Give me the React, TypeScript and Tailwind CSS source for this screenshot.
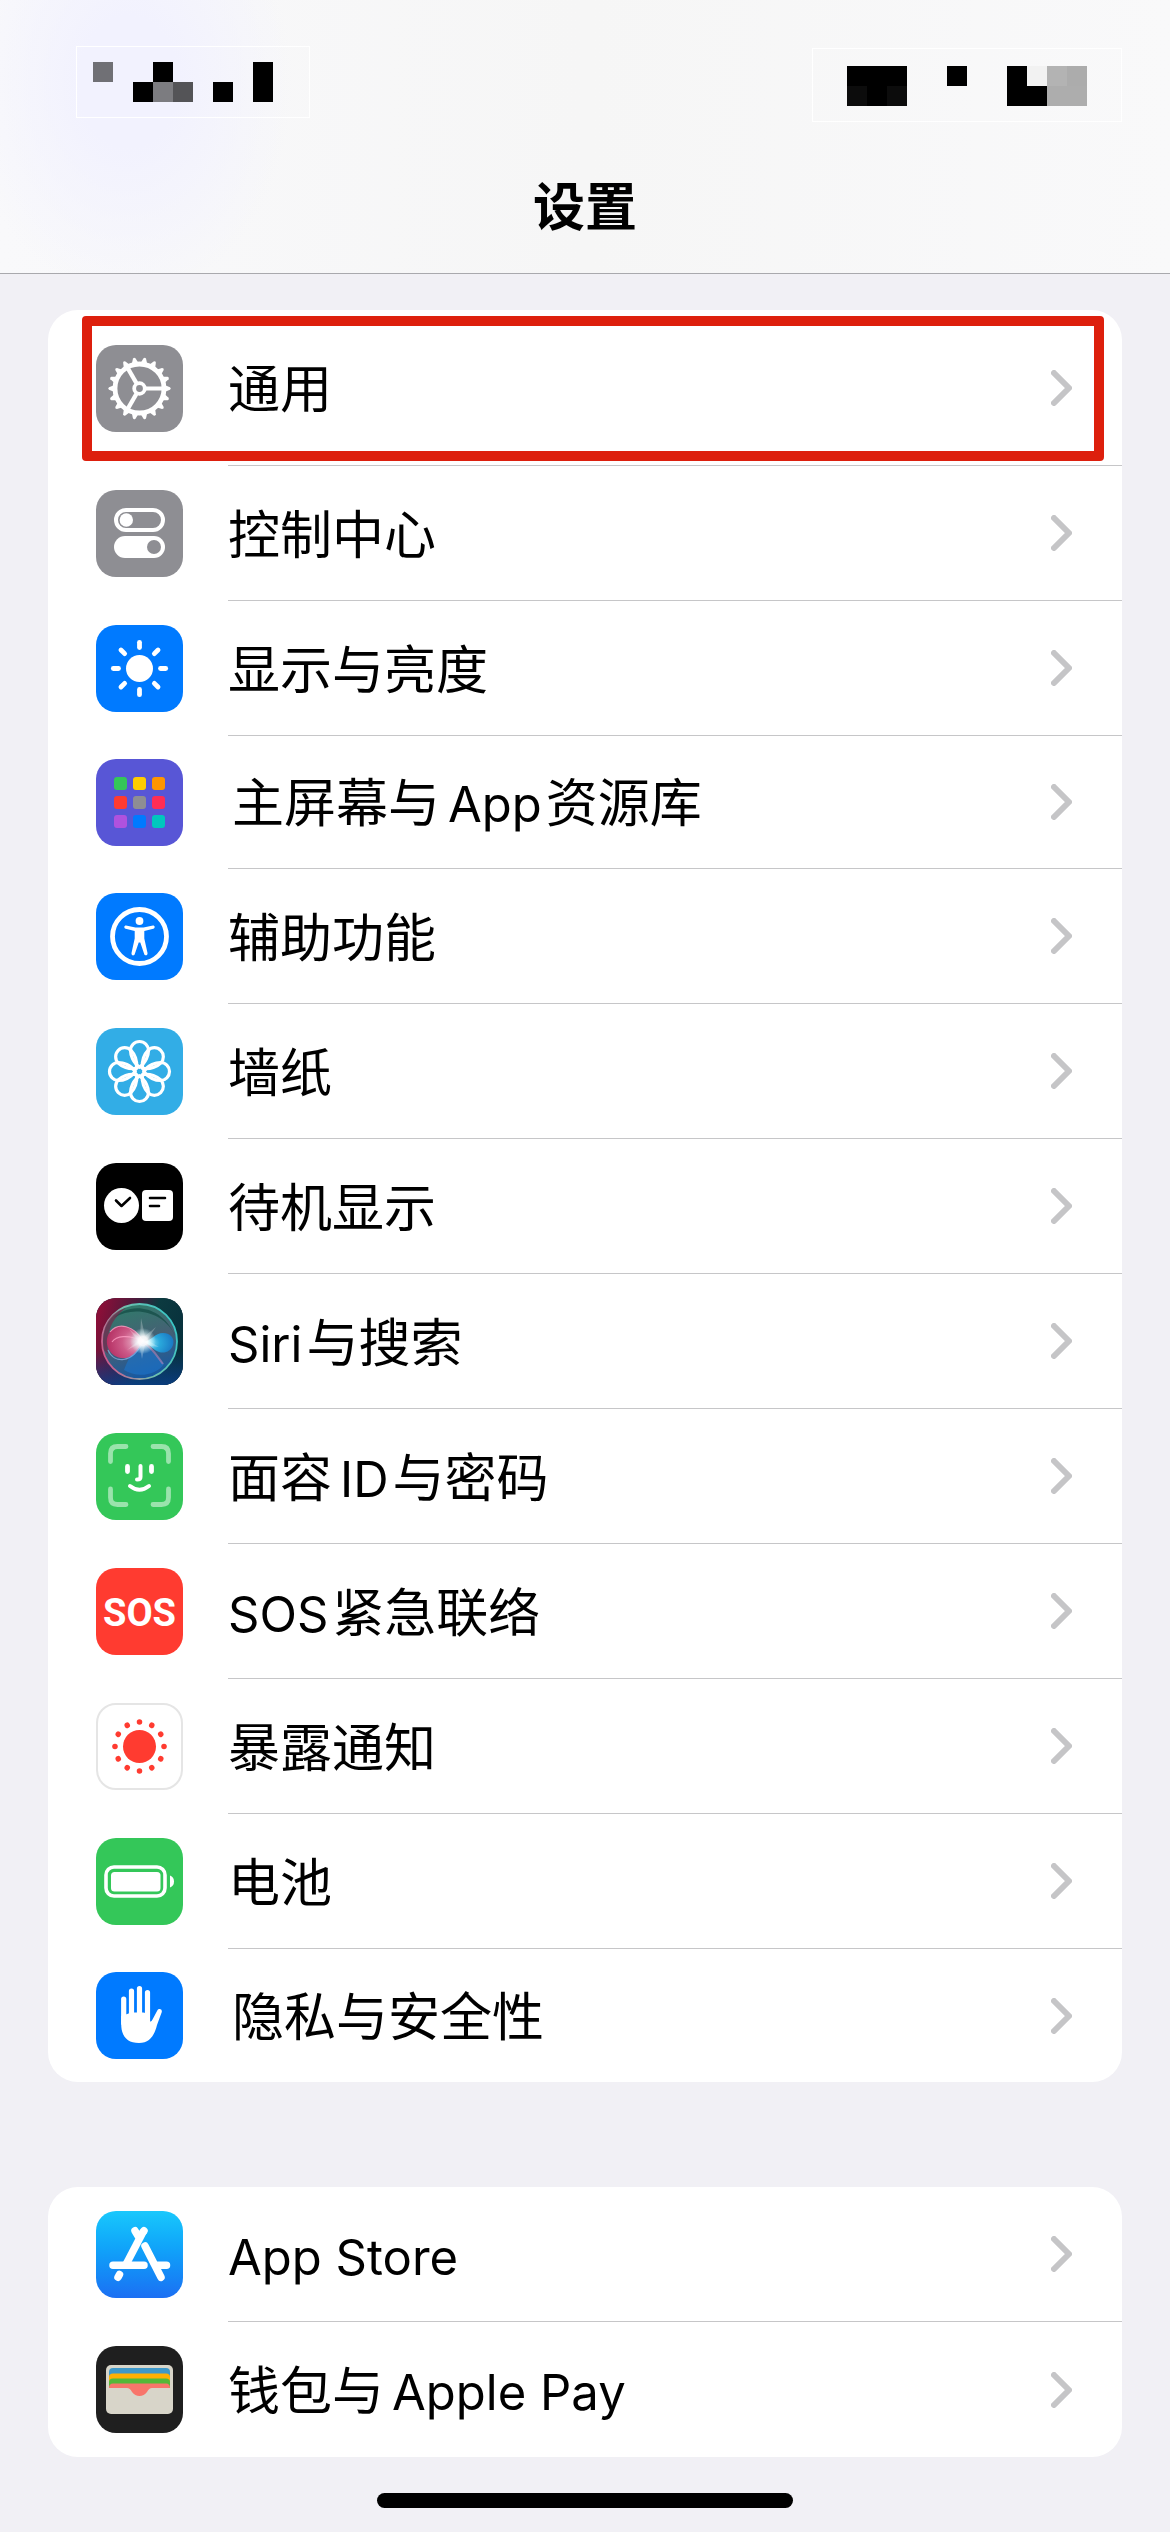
import type { ReactNode } from 'react'
import { clsx } from 'clsx'

interface SettingsItem {
  id: string
  label: string
  icon: ReactNode
  size?: 'tall' | 'regular' | 'short'
  highlighted?: boolean
}

interface MosaicCell {
  x: number
  y: number
  w?: number
  h?: number
  fill: string
}

const rowHeights = {
  tall: 'h-[156px]',
  regular: 'h-[135px]',
  short: 'h-[133px]',
}

const labelPadding = {
  tall: 'pt-1',
  regular: 'pt-1.5',
  short: 'pt-1 pl-1',
}

const leftMosaic: MosaicCell[] = [
  { x: 16, y: 15, fill: '#707075' },
  { x: 76, y: 15, fill: '#000' },
  { x: 56, y: 35, fill: '#000' },
  { x: 76, y: 35, fill: '#7c7c80' },
  { x: 96, y: 35, fill: '#545457' },
  { x: 136, y: 35, fill: '#000' },
  { x: 176, y: 15, h: 40, fill: '#000' },
]

const rightMosaic: MosaicCell[] = [
  { x: 34, y: 17, w: 60, h: 40, fill: '#000' },
  { x: 34, y: 37, fill: '#0c0c0c' },
  { x: 74, y: 37, fill: '#0c0c0c' },
  { x: 134, y: 17, fill: '#000' },
  { x: 194, y: 17, h: 40, fill: '#000' },
  { x: 214, y: 17, fill: '#f2f2f2' },
  { x: 214, y: 37, fill: '#000' },
  { x: 234, y: 17, fill: '#b3b3b3' },
  { x: 254, y: 17, fill: '#acacac' },
  { x: 234, y: 37, w: 40, fill: '#adadad' },
]

function Mosaic({ cells, className }: { cells: MosaicCell[]; className: string }) {
  return (
    <svg className={className} aria-hidden="true" shapeRendering="crispEdges">
      {cells.map((c) => (
        <rect key={`${c.x}-${c.y}`} x={c.x} y={c.y} width={c.w ?? 20} height={c.h ?? 20} fill={c.fill} />
      ))}
    </svg>
  )
}

function Tile({ className, children }: { className: string; children: ReactNode }) {
  return (
    <span className={clsx('block size-[87px] shrink-0 overflow-hidden rounded-[20px]', className)}>
      <svg viewBox="0 0 87 87" className="size-full" aria-hidden="true">
        {children}
      </svg>
    </span>
  )
}

// evenly spaced angles for radial icons
function ring(count: number, offset = 0) {
  return Array.from({ length: count }, (_, i) => offset + (i * 360) / count)
}

function GearIcon() {
  return (
    <Tile className="bg-[#8e8e93]">
      <g fill="#fff">
        {ring(18, 10).map((a) => (
          <path key={a} d="M40 18.5 42.2 13q1.3-1.6 2.6 0L47 18.5Z" transform={`rotate(${a} 43.5 43.5)`} />
        ))}
      </g>
      <g fill="none" stroke="#fff">
        <circle cx="43.5" cy="43.5" r="24.5" strokeWidth="4.8" />
        <circle cx="43.5" cy="43.5" r="5.3" strokeWidth="3.8" />
        {ring(3).map((a) => (
          <path key={a} d="M50 43.5H67" strokeWidth="4.2" transform={`rotate(${a} 43.5 43.5)`} />
        ))}
      </g>
    </Tile>
  )
}

function TogglesIcon() {
  return (
    <Tile className="bg-[#8e8e93]">
      <rect x="20" y="20" width="47" height="20" rx="10" fill="none" stroke="#fff" strokeWidth="4" />
      <circle cx="30.3" cy="30" r="6.7" fill="#fff" />
      <rect x="18" y="46" width="51" height="22" rx="11" fill="#fff" />
      <circle cx="58" cy="57" r="7" fill="#8e8e93" />
    </Tile>
  )
}

function BrightnessIcon() {
  return (
    <Tile className="bg-[#007aff]">
      <circle cx="43.5" cy="43.5" r="13.5" fill="#fff" />
      {ring(8).map((a) => (
        <path
          key={a}
          d="M43.5 17.3v5.2"
          stroke="#fff"
          strokeWidth="4.8"
          strokeLinecap="round"
          transform={`rotate(${a} 43.5 43.5)`}
        />
      ))}
    </Tile>
  )
}

const gridColors = [
  '#34c759', '#ffcc00', '#ff9500',
  '#ff3b30', '#8e8e93', '#ff2d55',
  '#af52de', '#007aff', '#00c7be',
]

function HomeGridIcon() {
  return (
    <Tile className="bg-[#5856d6]">
      {gridColors.map((color, i) => (
        <rect
          key={color}
          x={18 + (i % 3) * 19}
          y={18 + Math.floor(i / 3) * 19}
          width="13"
          height="13"
          rx="3"
          fill={color}
        />
      ))}
    </Tile>
  )
}

function AccessibilityIcon() {
  return (
    <Tile className="bg-[#007aff]">
      <circle cx="43.5" cy="43.5" r="27" fill="none" stroke="#fff" strokeWidth="4.8" />
      <circle cx="43.5" cy="28" r="3.9" fill="#fff" />
      <path
        d="M30 32.5 39.5 34.5h8L57 32.5c2 0 2.3 2.6.3 3.2L48.3 38v7.5l3.2 14.5c.4 2.6-2.6 3.2-3.3.9L44.3 49.5h-1.6L38.8 61c-.7 2.300-3.700 1.700-3.300-.9L38.700 45.500V38L29.700 35.700c-2-.6-1.700-3.200.3-3.200Z"
        fill="#fff"
      />
    </Tile>
  )
}

function FlowerIcon() {
  return (
    <Tile className="bg-[#32ade6]">
      <g fill="none" stroke="#fff" strokeWidth="3.2">
        {ring(8).map((a) => (
          <path
            key={a}
            d="M43.5 39C37 35 34.500 27 34.500 22.500a9 9 0 0 1 18 0c0 4.500-2.500 12.500-9 16.500Z"
            transform={`rotate(${a} 43.5 43.5)`}
          />
        ))}
        <circle cx="43.5" cy="43.5" r="4.5" />
      </g>
    </Tile>
  )
}

function StandByIcon() {
  return (
    <Tile className="bg-black">
      <circle cx="25.5" cy="42.5" r="17.5" fill="#fff" />
      <rect x="46" y="27" width="31" height="31" rx="4" fill="#fff" />
      <g fill="none" stroke="#000" strokeWidth="2.6" strokeLinecap="round" strokeLinejoin="round">
        <path d="m20 37.5 5.5 5.5 8.5-8" />
        <path d="M54 35H69M54 43h9" />
      </g>
    </Tile>
  )
}

function SiriIcon() {
  return (
    <Tile className="bg-[#112233]">
      <defs>
        <linearGradient id="siri-bg" x1="0" y1="0.3" x2="1" y2="0.6">
          <stop offset="0" stopColor="#8a0f38" />
          <stop offset="0.35" stopColor="#4a1a3c" />
          <stop offset="0.6" stopColor="#0c3a40" />
          <stop offset="1" stopColor="#07303c" />
        </linearGradient>
        <linearGradient id="siri-floor" x1="0" y1="0" x2="0" y2="1">
          <stop offset="0.6" stopColor="#0a3f8c" stopOpacity="0" />
          <stop offset="1" stopColor="#0a3f8c" stopOpacity="0.8" />
        </linearGradient>
        <linearGradient id="siri-orb" x1="0.3" y1="0" x2="0.6" y2="1">
          <stop offset="0" stopColor="#2f7c6a" />
          <stop offset="0.5" stopColor="#456074" />
          <stop offset="1" stopColor="#1458a4" />
        </linearGradient>
        <linearGradient id="siri-rim" x1="0" y1="0.7" x2="1" y2="0.3">
          <stop offset="0" stopColor="#d2568c" />
          <stop offset="0.5" stopColor="#6fbfae" />
          <stop offset="1" stopColor="#36c6c6" />
        </linearGradient>
        <radialGradient id="siri-pink" cx="0.85" cy="0.5" r="0.85">
          <stop offset="0" stopColor="#ffc5da" />
          <stop offset="0.5" stopColor="#dc5a8a" />
          <stop offset="1" stopColor="#c22a62" />
        </radialGradient>
        <radialGradient id="siri-blue" cx="0.1" cy="0.5" r="0.9">
          <stop offset="0" stopColor="#b5f4ff" />
          <stop offset="0.5" stopColor="#2aa9dc" />
          <stop offset="1" stopColor="#1a79c4" />
        </radialGradient>
        <radialGradient id="siri-glow">
          <stop offset="0" stopColor="#fff" />
          <stop offset="0.35" stopColor="#fff" stopOpacity="0.9" />
          <stop offset="1" stopColor="#ccffff" stopOpacity="0" />
        </radialGradient>
      </defs>
      <rect width="87" height="87" fill="url(#siri-bg)" />
      <rect width="87" height="87" fill="url(#siri-floor)" />
      <circle cx="43.5" cy="43.5" r="37.5" fill="url(#siri-orb)" stroke="url(#siri-rim)" strokeWidth="1.8" />
      <path d="M18 20C32 4 66 6 79 38 70 16 40 6 18 20Z" fill="#174f48" opacity="0.8" />
      <path d="M8 52C4 30 14 14 30 10 14 22 10 36 12 56Z" fill="#7d1c45" opacity="0.6" />
      <path d="M47 44C36 52 32 62 28 72 40 80 60 78 68 66 60 58 54 50 47 44Z" fill="#1d74cc" opacity="0.6" />
      <path d="M47 43C38 27 22 24 14 34S14 62 30 60c9-2 13-10 17-17Z" fill="url(#siri-pink)" opacity="0.9" />
      <path
        d="M47 43C38 27 22 24 14 34M16 44c4-6 16-8 30-1"
        fill="none"
        stroke="#ff9fc4"
        strokeWidth="1.2"
        opacity="0.8"
      />
      <path d="M47 44c8-1 12-9 20-9s12 6 10 12-8 9-14 7-9-8-16-10Z" fill="url(#siri-blue)" />
      <path d="M12 52c6 14 24 14 35-8" fill="none" stroke="#8fb6ea" strokeWidth="1.2" opacity="0.7" />
      <path d="M47 44c8 4 14 14 20 22" fill="none" stroke="#b884b8" strokeWidth="2" opacity="0.6" />
      <path d="m45 20 4 18 11-9-9 13 12 7-14-2-3 14-3-15-12 6 11-9-9-12 11 9Z" fill="#fff" opacity="0.25" />
      <circle cx="47" cy="43" r="13" fill="url(#siri-glow)" />
    </Tile>
  )
}

function FaceIdIcon() {
  return (
    <Tile className="bg-[#34c759]">
      <g fill="none" stroke="#fff" strokeWidth="4.8" strokeLinecap="round" strokeLinejoin="round">
        <path
          d="M14.5 28.5v-8q0-7 7-7H30M57 13.5h8.500q7 0 7 7v8M14.500 56v8.500q0 7 7 7H30M57 71.500h8.500q7 0 7-7V56"
          opacity="0.5"
        />
        <path d="M31.500 33.500v5M55.500 33.500v5" />
        <path d="M44.500 33v11q0 2.500-3.500 2.500" strokeWidth="4" />
        <path d="M34 53q9.500 7.500 19 0" strokeWidth="4" />
      </g>
    </Tile>
  )
}

function SosIcon() {
  return (
    <Tile className="bg-[#ff3b30]">
      <text
        x="43.5"
        y="58"
        textAnchor="middle"
        fill="#fff"
        className="font-['Liberation_Sans_Narrow','Roboto',sans-serif] text-[38px] font-bold"
      >
        SOS
      </text>
    </Tile>
  )
}

function ExposureIcon() {
  return (
    <Tile className="border-2 border-[#e5e5e5] bg-white">
      <circle cx="43.5" cy="43.5" r="17.3" fill="#ff3b30" />
      {ring(12).map((a) => (
        <circle key={a} cx="43.5" cy="17.8" r="2.9" fill="#ff3b30" transform={`rotate(${a} 43.5 43.5)`} />
      ))}
    </Tile>
  )
}

function BatteryIcon() {
  return (
    <Tile className="bg-[#34c759]">
      <rect x="10" y="29" width="59" height="29" rx="8" fill="none" stroke="#fff" strokeWidth="3.6" />
      <rect x="15" y="34" width="49.5" height="19.5" rx="3.5" fill="#fff" />
      <path d="M74 37.500q4 1.500 4 6t-4 6Z" fill="#fff" />
    </Tile>
  )
}

function HandIcon() {
  return (
    <Tile className="bg-[#007aff]">
      <path
        d="M27.7 27v24M35.5 19v28M43.5 16.500V47M51.500 20.500V49"
        fill="none"
        stroke="#fff"
        strokeWidth="5.2"
        strokeLinecap="round"
      />
      <path
        d="M25.200 44l6-2 4-1.500h12L54 42v7.500q1.500.5 2.500-2l4.800-9c1.500-2.500 5-1.500 4.500 1.500L61 53C58.500 63 54 71 43 71 31 71 25.200 64 25.200 52Z"
        fill="#fff"
      />
    </Tile>
  )
}

function AppStoreIcon() {
  return (
    <Tile className="bg-linear-to-b from-[#1ac8fc] to-[#1c6ff3]">
      <g fill="none" stroke="#fff" strokeWidth="7.5" strokeLinecap="round">
        <path d="M47.500 20 30 53.500" strokeLinecap="butt" />
        <path d="M48 19.800 47.500 20.500M39 19.800 42 25" />
        <path d="M49 35 65 66.300" />
        <path d="M23.500 63.500 22 66.300" />
        <path d="M17 54.200H48M62 54.200h8.500" />
      </g>
    </Tile>
  )
}

function WalletIcon() {
  return (
    <Tile className="bg-[#1f1f1f]">
      <rect x="10" y="19" width="67" height="49" rx="5" fill="#d8d5c9" />
      <path d="M13 32v-6q0-4 4-4h53q4 0 4 4v6Z" fill="#3e98c9" />
      <path d="M13 37v-6q0-3.500 4-3.500h53q4 0 4 3.500v6Z" fill="#ffb003" />
      <path d="M13 42v-6q0-3.500 4-3.500h53q4 0 4 3.500v6Z" fill="#54b839" />
      <path d="M13 42q0-4.500 4-4.500h53q4 0 4 4.500H56q-3 0-5 4-3 4-7.500 4T36 46q-2-4-5-4Z" fill="#f8756b" />
    </Tile>
  )
}

const systemItems: SettingsItem[] = [
  { id: 'general', label: '通用', icon: <GearIcon />, size: 'tall', highlighted: true },
  { id: 'control-center', label: '控制中心', icon: <TogglesIcon /> },
  { id: 'display', label: '显示与亮度', icon: <BrightnessIcon /> },
  { id: 'home-screen', label: '主屏幕与App资源库', icon: <HomeGridIcon />, size: 'short' },
  { id: 'accessibility', label: '辅助功能', icon: <AccessibilityIcon /> },
  { id: 'wallpaper', label: '墙纸', icon: <FlowerIcon /> },
  { id: 'standby', label: '待机显示', icon: <StandByIcon /> },
  { id: 'siri', label: 'Siri与搜索', icon: <SiriIcon /> },
  { id: 'face-id', label: '面容ID与密码', icon: <FaceIdIcon /> },
  { id: 'sos', label: 'SOS紧急联络', icon: <SosIcon /> },
  { id: 'exposure', label: '暴露通知', icon: <ExposureIcon /> },
  { id: 'battery', label: '电池', icon: <BatteryIcon /> },
  { id: 'privacy', label: '隐私与安全性', icon: <HandIcon />, size: 'short' },
]

const storeItems: SettingsItem[] = [
  { id: 'app-store', label: 'App Store', icon: <AppStoreIcon /> },
  { id: 'wallet', label: '钱包与Apple Pay', icon: <WalletIcon /> },
]

// Latin runs are set a little smaller and get some air next to Chinese text
function Label({ text }: { text: string }) {
  const runs = text.split(/([A-Za-z][A-Za-z ]*)/).filter(Boolean)
  return runs.map((run, i) =>
    /^[A-Za-z]/.test(run) ? (
      <span key={run} className={clsx('text-[49px]', i > 0 && 'ml-2', i < runs.length - 1 && 'mr-1')}>
        {run}
      </span>
    ) : (
      run
    ),
  )
}

function SettingsRow({ item }: { item: SettingsItem }) {
  const size = item.size ?? 'regular'
  return (
    <li className={clsx('group relative', rowHeights[size])}>
      <a href={`#${item.id}`} className="flex h-full items-center gap-[45px] pl-12">
        {item.icon}
        <span className="flex h-full flex-1 items-center justify-between border-b border-[#c6c6c8] pr-[50px] group-last:border-b-0">
          <span className={clsx('whitespace-nowrap', labelPadding[size])}>
            <Label text={item.label} />
          </span>
          <svg viewBox="0 0 21 36" className="h-9 w-[21px] shrink-0" aria-hidden="true">
            <path
              d="M3 3 18 18 3 33"
              fill="none"
              stroke="#c5c5c7"
              strokeWidth="6"
              strokeLinecap="round"
              strokeLinejoin="round"
            />
          </svg>
        </span>
      </a>
      {item.highlighted && (
        <span
          aria-hidden="true"
          className="pointer-events-none absolute top-1.5 right-[18px] bottom-[5px] left-[34px] rounded-[4px] border-10 border-[#dd1f0d]"
        />
      )}
    </li>
  )
}

function SettingsGroup({ items }: { items: SettingsItem[] }) {
  return (
    <ul className="rounded-[30px] bg-white">
      {items.map((item) => (
        <SettingsRow key={item.id} item={item} />
      ))}
    </ul>
  )
}

export default function App() {
  return (
    <div className="flex min-h-screen flex-col bg-[#f1f0f5] font-['Inter','Noto_Sans_CJK_SC',sans-serif] text-[52px] leading-[72px] text-black">
      <header className="border-b border-[#a9a9ad] bg-linear-to-r from-[#f9f9fb] via-[#f6f6f6] to-[#f9f9fa]">
        <div className="bg-[radial-gradient(ellipse_14%_80%_at_11%_30%,#f2f2fe_30%,#f2f2fe00)]">
          <div className="flex items-start justify-between pt-[46px] pr-12 pl-[76px]">
            <Mosaic cells={leftMosaic} className="h-[72px] w-[234px] border border-white" />
            <Mosaic cells={rightMosaic} className="mt-0.5 h-[74px] w-[310px] border border-white" />
          </div>
          <h1 className="pt-[50px] pb-[29px] text-center font-bold">设置</h1>
        </div>
      </header>
      <main className="flex flex-col gap-[105px] px-12 pt-9">
        <SettingsGroup items={systemItems} />
        <SettingsGroup items={storeItems} />
      </main>
      <footer className="flex justify-center pt-9 pb-6">
        <div className="h-[15px] w-[416px] rounded-full bg-black" />
      </footer>
    </div>
  )
}
